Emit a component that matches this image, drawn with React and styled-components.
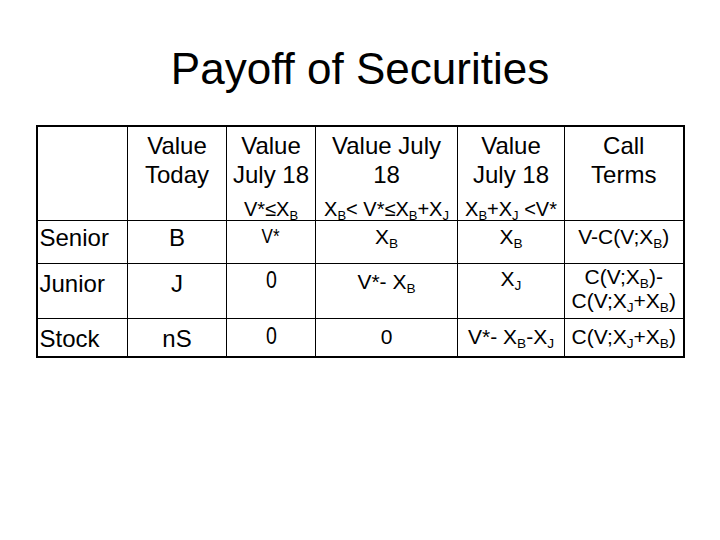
import React from 'react';
import styled, { createGlobalStyle } from 'styled-components';

const GlobalStyle = createGlobalStyle`
  html, body {
    margin: 0;
    padding: 0;
    background: #fff;
  }
  body {
    font-family: "Liberation Sans", Arial, sans-serif;
    color: #000;
  }
`;

const Slide = styled.div`
  width: 720px;
  height: 540px;
  padding-top: 44px;
  box-sizing: border-box;
  background: #fff;
`;

const Title = styled.h1`
  margin: 0;
  font-weight: normal;
  font-size: 44px;
  line-height: 1.15;
  text-align: center;
`;

const Table = styled.table`
  border-collapse: collapse;
  border: 2px solid #000;
  width: 647px;
  margin: 30px auto 0;
  table-layout: fixed;
`;

const Row = styled.tr`
  height: ${(p) => p.$h}px;
`;

const Cell = styled.td`
  border: 1px solid #000;
  padding: ${(p) => p.$pad || '4px 2px 0'};
  vertical-align: top;
  text-align: ${(p) => (p.$left ? 'left' : 'center')};
  font-size: ${(p) => p.$size || 24}px;
  line-height: ${(p) => p.$lh || 1.2};
  white-space: nowrap;
`;

const Narrow = styled.span`
  display: inline-block;
  transform: scaleX(0.85);
`;

const HeadCell = styled.td`
  border: 1px solid #000;
  padding: 4px 2px 0;
  vertical-align: top;
  text-align: center;
  height: 89px;
`;

const HeadStack = styled.div`
  display: flex;
  flex-direction: column;
  justify-content: space-between;
  height: 89px;
`;

const HeadMain = styled.div`
  font-size: 24px;
  line-height: 29px;
`;

const HeadSub = styled.div`
  font-size: 20px;
  line-height: 18px;
  padding-bottom: 2px;
  white-space: nowrap;
`;

const Sub = styled.sub`
  font-size: 0.65em;
  vertical-align: -0.28em;
  line-height: 0;
`;

const cols = [91, 99, 89, 142, 107, 119];

export default function App() {
  return (
    <Slide>
      <GlobalStyle />
      <Title>Payoff of Securities</Title>
      <Table>
        <colgroup>
          {cols.map((w, i) => (
            <col key={i} style={{ width: w }} />
          ))}
        </colgroup>
        <tbody>
          <Row $h={93}>
            <HeadCell />
            <HeadCell>
              <HeadStack>
                <HeadMain>
                  Value
                  <br />
                  Today
                </HeadMain>
              </HeadStack>
            </HeadCell>
            <HeadCell>
              <HeadStack>
                <HeadMain>
                  Value
                  <br />
                  July 18
                </HeadMain>
                <HeadSub>
                  V*≤X<Sub>B</Sub>
                </HeadSub>
              </HeadStack>
            </HeadCell>
            <HeadCell>
              <HeadStack>
                <HeadMain>
                  Value July
                  <br />
                  18
                </HeadMain>
                <HeadSub>
                  X<Sub>B</Sub>&lt; V*≤X<Sub>B</Sub>+X<Sub>J</Sub>
                </HeadSub>
              </HeadStack>
            </HeadCell>
            <HeadCell>
              <HeadStack>
                <HeadMain>
                  Value
                  <br />
                  July 18
                </HeadMain>
                <HeadSub>
                  X<Sub>B</Sub>+X<Sub>J</Sub> &lt;V*
                </HeadSub>
              </HeadStack>
            </HeadCell>
            <HeadCell>
              <HeadStack>
                <HeadMain>
                  Call
                  <br />
                  Terms
                </HeadMain>
              </HeadStack>
            </HeadCell>
          </Row>

          <Row $h={43}>
            <Cell $left $pad="3px 2px 0">Senior</Cell>
            <Cell $pad="3px 2px 0">B</Cell>
            <Cell $size={20} $pad="3px 2px 0">
              <Narrow>V*</Narrow>
            </Cell>
            <Cell $size={21} $pad="3px 2px 0">
              X<Sub>B</Sub>
            </Cell>
            <Cell $size={21} $pad="3px 2px 0">
              X<Sub>B</Sub>
            </Cell>
            <Cell $size={21} $pad="3px 2px 0">
              V-C(V;X<Sub>B</Sub>)
            </Cell>
          </Row>

          <Row $h={55}>
            <Cell $left $pad="6px 2px 0">Junior</Cell>
            <Cell $pad="6px 2px 0">J</Cell>
            <Cell $size={23} $pad="3px 2px 0">
              <Narrow>0</Narrow>
            </Cell>
            <Cell $size={21} $pad="5px 2px 0">
              V*- X<Sub>B</Sub>
            </Cell>
            <Cell $size={21} $pad="2px 2px 0">
              X<Sub>J</Sub>
            </Cell>
            <Cell $size={21} $lh={1.15} $pad="1px 2px 0">
              C(V;X<Sub>B</Sub>)-
              <br />
              C(V;X<Sub>J</Sub>+X<Sub>B</Sub>)
            </Cell>
          </Row>

          <Row $h={39}>
            <Cell $left $pad="6px 2px 0">Stock</Cell>
            <Cell $pad="6px 2px 0">nS</Cell>
            <Cell $size={23} $pad="4px 2px 0">
              <Narrow>0</Narrow>
            </Cell>
            <Cell $size={21} $pad="5px 2px 0">0</Cell>
            <Cell $size={21} $pad="5px 2px 0">
              V*- X<Sub>B</Sub>-X<Sub>J</Sub>
            </Cell>
            <Cell $size={21} $pad="5px 2px 0">
              C(V;X<Sub>J</Sub>+X<Sub>B</Sub>)
            </Cell>
          </Row>
        </tbody>
      </Table>
    </Slide>
  );
}
